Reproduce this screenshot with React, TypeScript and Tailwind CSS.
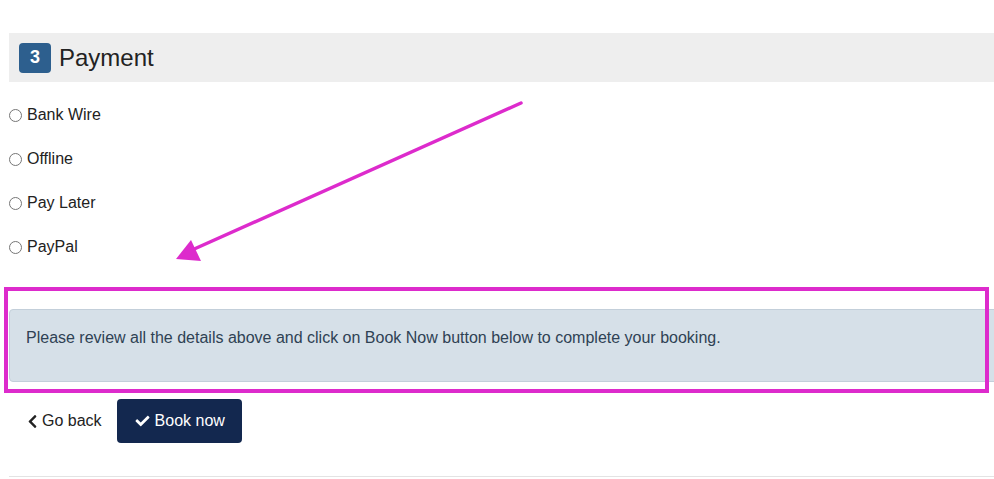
import React from "react";
import { FaChevronLeft, FaCheck } from "react-icons/fa";

const methods = ["Bank Wire", "Offline", "Pay Later", "PayPal"];

export default function App() {
  return (
    <div
      className="relative w-[994px] h-[479px] overflow-hidden bg-white text-[#222]"
      style={{ fontFamily: '"Liberation Sans", Arial, sans-serif' }}
    >
      <div className="pl-[9px] pt-[33px] mr-[-6px]">
        <div className="h-[49px] bg-[#eeeeee] flex items-center pl-[10px]">
          <span className="w-[32px] h-[30px] rounded-[4px] bg-[#2d5f8e] text-white font-bold text-[18px] flex items-center justify-center">
            3
          </span>
          <span className="ml-[8px] text-[24px] leading-none text-[#222]">Payment</span>
        </div>

        <div className="mt-[11px] flex flex-col">
          {methods.map((m) => (
            <label key={m} className="h-[44px] flex items-center text-[16px]">
              <span className="w-[13px] h-[13px] rounded-full border border-[#767676] bg-white" />
              <span className="ml-[5px]">{m}</span>
            </label>
          ))}
        </div>

        <div className="mt-[40px] h-[73px] bg-[#d6e0e8] border border-[#c3cfda] rounded-[4px] pt-[17px] pl-[16px] text-[16px] leading-[22px] text-[#2f4254]">
          Please review all the details above and click on Book Now button below to complete your booking.
        </div>

        <div className="mt-[17px] flex items-center h-[44px]">
          <button className="flex items-center h-full px-[18px] text-[16px] text-[#222]">
            <FaChevronLeft className="w-[11px] h-[15px] mr-[4px]" />
            Go back
          </button>
          <button className="flex items-center h-full w-[125px] ml-[-3px] bg-[#13284f] rounded-[4px] text-white text-[16px] pl-[18px]">
            <FaCheck className="w-[15px] h-[14px] mr-[5px]" />
            Book now
          </button>
        </div>

        <div className="mt-[33px] h-px bg-[#e3e3e3]" />
      </div>

      <div className="absolute left-[4px] top-[287px] w-[985px] h-[106px] border-[4px] border-[#dd2bcc] pointer-events-none" />

      <svg className="absolute left-0 top-0 pointer-events-none" width="994" height="479">
        <line x1="521" y1="103" x2="192" y2="250" stroke="#dd2bcc" strokeWidth="3.5" strokeLinecap="round" />
        <polygon points="176,259 191,240 201,261" fill="#dd2bcc" />
      </svg>
    </div>
  );
}
